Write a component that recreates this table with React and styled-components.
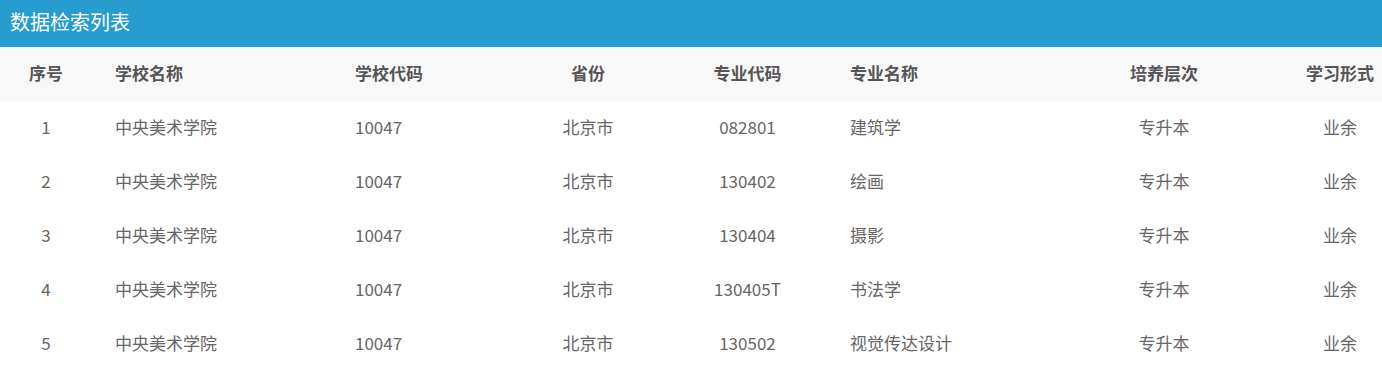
import React from "react";
import styled, { createGlobalStyle } from "styled-components";

const Global = createGlobalStyle`
  html, body { margin: 0; padding: 0; background: #fff; }
  body { font-family: "Noto Sans CJK SC", "Noto Sans", sans-serif; }
`;

const COLS = "92px 240px 176px 160px 159px 203px 268px 84px";

const Panel = styled.section`
  width: 1382px;
`;

const TitleBar = styled.div`
  height: 47px;
  background: #269ccf;
  color: #fff;
  font-size: 20px;
  display: flex;
  align-items: center;
  padding-left: 10px;
  padding-bottom: 5px;
  box-sizing: border-box;
`;

const Row = styled.div`
  display: grid;
  grid-template-columns: ${COLS};
  height: 54px;
  box-sizing: border-box;
  padding-bottom: ${(p) => (p.$head ? "3px" : "4px")};
  align-items: center;
  background: ${(p) => (p.$head ? "#f8f8f8" : "#fff")};
  color: ${(p) => (p.$head ? "#555" : "#666")};
  font-size: 17px;
  font-weight: ${(p) => (p.$head ? 700 : 400)};
`;

const Cell = styled.div`
  text-align: ${(p) => p.$align || "center"};
  padding-left: ${(p) => (p.$align === "left" ? "23px" : "0")};
  white-space: nowrap;
`;

const aligns = ["center", "left", "left", "center", "center", "left", "center", "center"];
const headers = ["序号", "学校名称", "学校代码", "省份", "专业代码", "专业名称", "培养层次", "学习形式"];
const rows = [
  ["1", "中央美术学院", "10047", "北京市", "082801", "建筑学", "专升本", "业余"],
  ["2", "中央美术学院", "10047", "北京市", "130402", "绘画", "专升本", "业余"],
  ["3", "中央美术学院", "10047", "北京市", "130404", "摄影", "专升本", "业余"],
  ["4", "中央美术学院", "10047", "北京市", "130405T", "书法学", "专升本", "业余"],
  ["5", "中央美术学院", "10047", "北京市", "130502", "视觉传达设计", "专升本", "业余"],
];

export default function App() {
  return (
    <Panel>
      <Global />
      <TitleBar>数据检索列表</TitleBar>
      <Row $head>
        {headers.map((h, i) => (
          <Cell key={i} $align={aligns[i]}>{h}</Cell>
        ))}
      </Row>
      {rows.map((r, ri) => (
        <Row key={ri}>
          {r.map((c, i) => (
            <Cell key={i} $align={aligns[i]}>{c}</Cell>
          ))}
        </Row>
      ))}
    </Panel>
  );
}
